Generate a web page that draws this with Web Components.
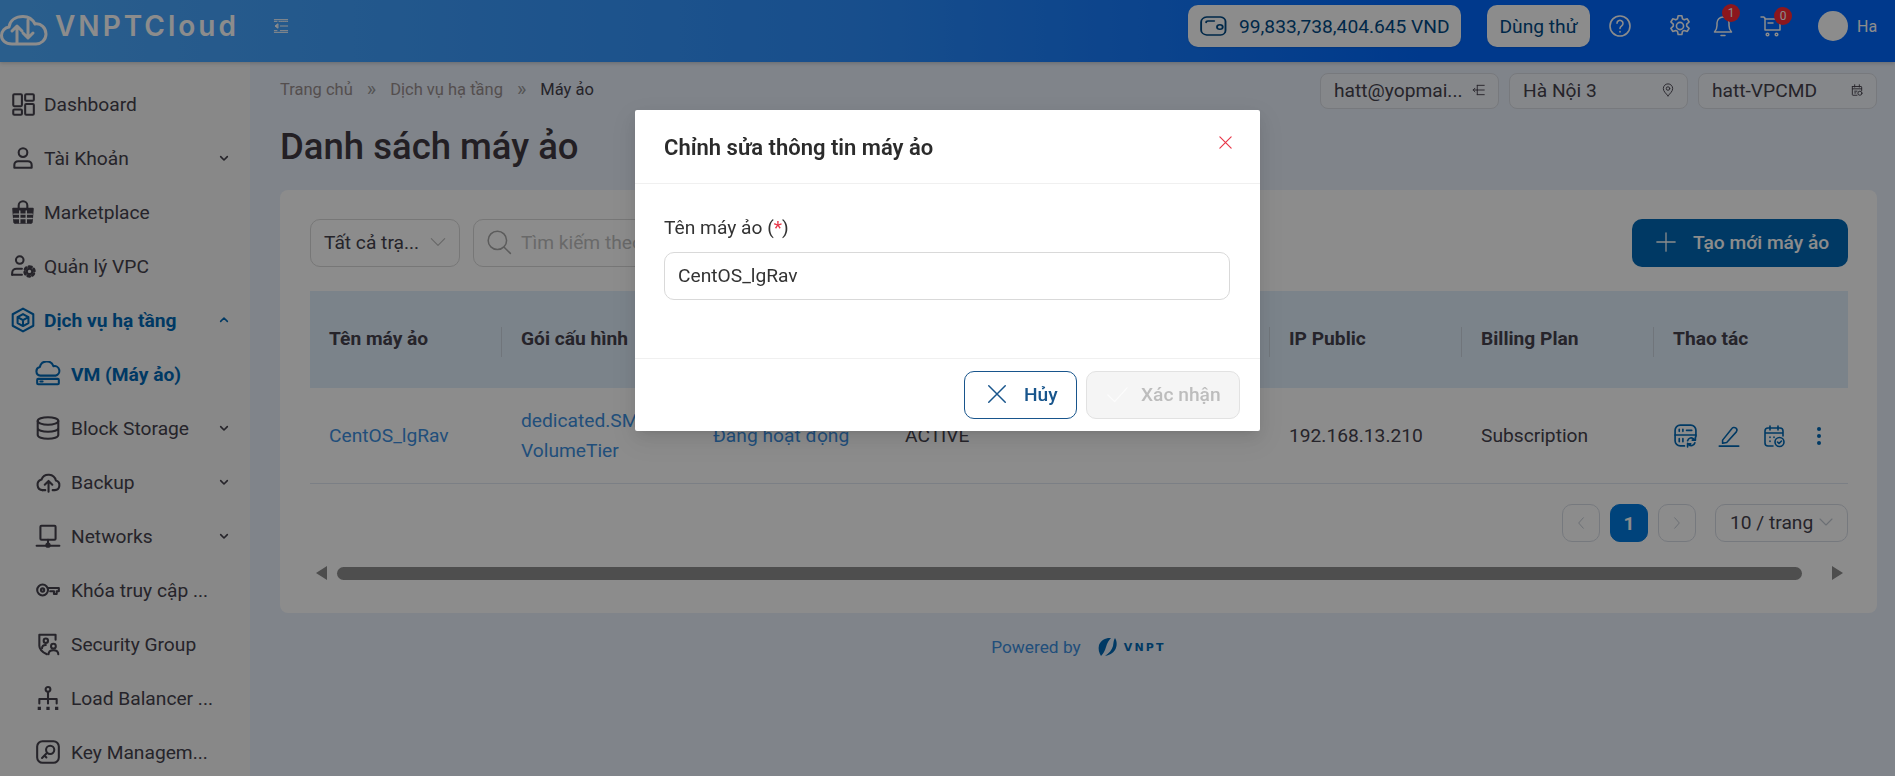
<!DOCTYPE html>
<html lang="vi">
<head>
<meta charset="utf-8">
<title>Danh sách máy ảo</title>
<style>
    html, body { margin: 0; height: 100%; overflow: hidden; }
    body { font-family: Roboto, "Noto Sans", sans-serif; color: #45424d; background: #e9f0fb; }
</style>
</head>
<body>
<app-shell>
    <app-header slot="header"></app-header>
    <side-nav slot="nav"></side-nav>
    <vm-page></vm-page>
</app-shell>
<edit-modal title="Chỉnh sửa thông tin máy ảo" label="Tên máy ảo" value="CentOS_lgRav"></edit-modal>

<script>
// all icons in one place, 24x24 box unless a viewBox is given
const ICONS = {
    dashboard: '<rect x="3" y="3" width="8" height="11" rx="1"/><rect x="14" y="3" width="8" height="6" rx="1"/><rect x="3" y="17" width="8" height="5" rx="1"/><rect x="14" y="12" width="8" height="10" rx="1"/>',
    user: '<circle cx="12" cy="7" r="4"/><path d="M4 21v-2.500c0-2 1.500-3.500 3.500-3.500h9c2 0 3.500 1.500 3.500 3.500V21z"/>',
    market: '<path d="M8 9V6a4 4 0 0 1 8 0v3"/><path fill="currentColor" d="M3 9h18l-1 12.500a1 1 0 0 1-1 .5H5a1 1 0 0 1-1-.5z"/><path stroke="#f7f7f7" stroke-width="1.300" d="M3.500 14h17M3.500 18h17M9 11v11M15 11v11"/>',
    vpc: '<circle cx="9" cy="6.500" r="3.500"/><path d="M2 20v-1.500c0-2.500 2-4 4-4h5"/><path d="M2 20h9"/><circle cx="18" cy="17" r="2.500"/><path stroke-width="2.500" stroke-dasharray="2 2.500" d="M18 12.500a4.500 4.500 0 1 1 0 9a4.500 4.500 0 1 1 0-9z"/>',
    infra: '<path d="M12 1.500l9.500 5.200v10.600L12 22.500l-9.500-5.200V6.700z"/><path d="M12 6.500l5 2.800v5.500l-5 2.800-5-2.800V9.300zM7 9.300l5 2.800 5-2.800M12 12.100v5.500"/>',
    vm: '<path d="M5 13.500a4 4 0 0 1-.5-7.900A6.500 6.500 0 0 1 17 4.800a4.400 4.400 0 0 1 2 8.700z"/><rect x="2" y="16.500" width="20" height="5" rx="1"/><path d="M5 19h2"/>',
    storage: '<ellipse cx="12" cy="5.500" rx="9.500" ry="3.500"/><path d="M2.500 5.500v13c0 2 4.300 3.500 9.500 3.500s9.500-1.500 9.500-3.500v-13M2.500 12c0 2 4.300 3.500 9.500 3.500s9.500-1.500 9.500-3.500"/>',
    backup: '<path d="M7 19.500a5 5 0 0 1-1-9.800 7 7 0 0 1 13.300 1 4.500 4.500 0 0 1-1 8.800h-2"/><path d="M7 19.500h2.500"/><path d="M12.500 21v-9M9 14.500l3.500-3.500 3.500 3.500"/>',
    network: '<rect x="5" y="2.500" width="14" height="13" rx="1"/><path d="M12 15.500V20M1.500 21h21"/><circle cx="12" cy="20.500" r="1.500" fill="currentColor"/>',
    key: '<circle cx="7" cy="12" r="5"/><circle cx="7" cy="12" r="1.500"/><path d="M12 10.200h10v3h-2v2.500h-2.500v-2.500H14"/>',
    security: '<path d="M19 8V3.500H4v10c0 3.500 3 6 7 8"/><circle cx="10" cy="9" r="2"/><path d="M6.500 16c0-2 1.500-3 3.500-3"/><circle cx="17" cy="14" r="2.200"/><path d="M12.500 21.500c0-2.500 2-3.800 4.500-3.800s4.500 1.300 4.500 3.800"/>',
    balancer: '<circle cx="12" cy="4" r="2.200"/><path d="M12 6.500V13M4 17v-4h16v4M12 13v4"/><path stroke-width="3" stroke-linecap="butt" d="M2.500 21.500h3M10.500 21.500h3M18.500 21.500h3"/>',
    keymgmt: '<rect x="2" y="2" width="20" height="20" rx="5"/><circle cx="14" cy="10" r="3.800"/><path d="M11 13l-4.500 4.500M9 15.500l1.500 1.500"/>',
    chevron: '<path d="M7 10l5 5 5-5"/>',
    chevronup: '<path d="M7 14l5-5 5 5"/>',
    down: '<path d="M4 8l8 8 8-8"/>',
    prev: '<path d="M16 3l-8 9 8 9"/>',
    next: '<path d="M8 3l8 9-8 9"/>',
    menu: '<path stroke-dasharray="2 1" d="M9 5h13M2 5h4M11 12h11M11 19h11M2 19h4"/><path d="M7 9l-4 3 4 3z" fill="currentColor"/><path stroke-dasharray="2 1" d="M2 2.500h20M2 21.500h20"/>',
    wallet: '<path d="M7 3h11a4.500 4.500 0 0 1 4 4.500v9a4.500 4.500 0 0 1-4 4.500H7a5 5 0 0 1-4.500-5V8A5 5 0 0 1 7 3z"/><path d="M6.500 8.500c0-1 .5-1.500 1.500-1.500h5"/><circle cx="17.500" cy="13" r="2.300"/>',
    help: '<circle cx="12" cy="12" r="10"/><path d="M9 9.300a3 3 0 1 1 4.700 2.500c-1 .7-1.700 1.300-1.700 2.700"/><path d="M12 17.500v.5"/>',
    gear: '<circle cx="12" cy="12" r="3.300"/><path d="M10.300 2.500h3.400l.6 2.900 1.600.9 2.800-.9 1.700 2.900-2.200 2v1.800l2.200 2-1.700 2.900-2.800-.9-1.600.9-.6 2.900h-3.400l-.6-2.900-1.600-.9-2.800.9-1.700-2.900 2.200-2v-1.800l-2.200-2 1.700-2.900 2.800.9 1.600-.9z"/>',
    bell: '<path d="M3.500 18c1.500-1.500 2.500-3 2.500-6.500V9a6 6 0 0 1 12 0v2.500c0 3.500 1 5 2.500 6.500z"/><path d="M10 21.500h4"/>',
    cart: '<path d="M2 3h3l1 2h15v11H6V4"/><path d="M9 9h5"/><circle cx="8.500" cy="20.500" r="1.300"/><circle cx="17.500" cy="20.500" r="1.300"/>',
    tree: '<path d="M9 12H2M9 4h12M9 12h12M9 20h12M9 4v16"/><path d="M5 9l-3 3 3 3"/>',
    pin: '<path d="M12 22c-4-4.500-8-8-8-12.500a8 8 0 0 1 16 0C20 14 16 17.500 12 22z"/><circle cx="12" cy="9.500" r="3"/>',
    vpcbox: '<path d="M4 6h15a1 1 0 0 1 1 1v6M4 6v14a1 1 0 0 0 1 1h7M4 10h16M8 3v4M16 3v4"/><circle cx="17" cy="17.500" r="3.500"/><path d="M8 14h4M8 17h2"/>',
    search: '<circle cx="10.500" cy="10.500" r="8.500"/><path d="M17 17l5.500 5.500"/>',
    plus: '<path d="M12 2v20M2 12h20"/>',
    close: '<path d="M3 3l18 18M21 3L3 21"/>',
    check: '<path d="M2 12.500l7 7L22 5"/>',
    serverSync: '<path d="M11 22H7a5 5 0 0 1-5-5V7a5 5 0 0 1 5-5h10a5 5 0 0 1 5 5v6"/><path d="M2 11.500h20M6 6v2M9.500 6v2M13 7h5M6 15v3M9.500 15v3"/><path d="M14 17a3.500 3.500 0 0 1 6-1.500l1.500 1M21.500 13.500v3h-3M21 19a3.500 3.500 0 0 1-6 1.500l-1-1M14 23v-3h3"/>',
    pencil: '<path d="M5 16.500L15 4a3 3 0 0 1 5 3.500L9.500 19l-4.500 1z"/><path d="M1.500 23h21" stroke-width="2"/>',
    calCheck: '<path d="M11 22H6a3 3 0 0 1-3-3V7a3 3 0 0 1 3-3h12a3 3 0 0 1 3 3v5M3 9h18M8 2v4M16 2v4M8 13v.5M12 13v.5M8 17v.5"/><circle cx="17.500" cy="18" r="4.500"/><path d="M15.500 18l1.500 1.500 2.500-2.500"/>',
    cloudLogo: '<path d="M12 39C5 39 1.500 35 1.500 30.500 1.500 26 5 22.500 9 22c1-7 7-10.500 14-10.500 6 0 10 3.500 12 7.500 6-1 11 4 11 10s-5 10-10 10z"/><path d="M17 38V21M12 26l5-5 5 5"/><path d="M28 15v18M23 28l5 5 5-5"/>'
};

class UiIcon extends HTMLElement {
    connectedCallback() {
        const name = this.getAttribute('name');
        const size = this.getAttribute('size') || 22;
        const w = this.getAttribute('w') || 1.8;
        const box = this.getAttribute('box') || '0 0 24 24';
        this.attachShadow({ mode: 'open' }).innerHTML = `
            <style>
                :host { display: inline-flex; flex: none; line-height: 0; }
                svg { fill: none; stroke: currentColor; stroke-linecap: round; stroke-linejoin: round; }
            </style>
            <svg width="${size}" height="${this.getAttribute('h') || size}" viewBox="${box}" stroke-width="${w}" preserveAspectRatio="none">${ICONS[name] || ''}</svg>
        `;
    }
}
customElements.define('ui-icon', UiIcon);

class AppShell extends HTMLElement {
    constructor() {
        super();
        this.attachShadow({ mode: 'open' }).innerHTML = `
            <style>
                :host { display: grid; grid-template-columns: 250px 1fr; grid-template-rows: 62px 1fr; height: 776px; overflow: hidden; }
                .top { grid-column: 1 / 3; position: relative; z-index: 1; box-shadow: 0 1px 4px rgba(0,0,0,.2); }
                .nav { overflow: hidden; }
                .main { overflow: hidden; min-width: 0; }
            </style>
            <div class="top"><slot name="header"></slot></div>
            <div class="nav"><slot name="nav"></slot></div>
            <div class="main"><slot></slot></div>
        `;
    }
}
customElements.define('app-shell', AppShell);

class AppHeader extends HTMLElement {
    constructor() {
        super();
        this.attachShadow({ mode: 'open' }).innerHTML = `
            <style>
                :host { display: flex; align-items: center; height: 62px; box-sizing: border-box; padding-bottom: 10px; color: #fff; background: linear-gradient(90deg, #4eacff 0%, #2c8fff 45%, #0069ff 75%, #0069ff 100%); }
                .logo { display: flex; align-items: center; width: 273px; flex: none; color: #fff; }
                .logo b { font: 600 28px/1 Inter, Roboto, sans-serif; letter-spacing: 3px; margin-left: 7px; white-space: nowrap; }
                .spacer { flex: 1; }
                .pill { display: flex; align-items: center; height: 42px; box-sizing: border-box; background: #fff; border-radius: 10px; color: #004a85; font-size: 19.2px; box-shadow: 0 1px 2px rgba(0,0,0,.1); white-space: nowrap; }
                .wallet { width: 273px; padding-left: 10px; gap: 11px; }
                .try { width: 103px; justify-content: center; margin-left: 26px; }
                .tool { position: relative; display: flex; }
                .count { position: absolute; width: 18px; height: 18px; border-radius: 50%; background: #ff2a35; color: #fff; font-size: 12px; line-height: 18px; text-align: center; }
                .avatar { width: 30px; height: 30px; border-radius: 50%; background: #fff; margin-left: 35px; flex: none; }
                .name { width: 20px; margin: 0 18px 0 9px; font-size: 16px; flex: none; }
            </style>
            <div class="logo">
                <ui-icon name="cloudLogo" box="0 0 48 42" size="48" h="42" w="3"></ui-icon>
                <b>VNPTCloud</b>
            </div>
            <ui-icon name="menu" size="16" w="1.500"></ui-icon>
            <div class="spacer"></div>
            <div class="pill wallet"><ui-icon name="wallet" size="30" h="24" w="1.500"></ui-icon>99,833,738,404.645 VND</div>
            <div class="pill try">Dùng thử</div>
            <div class="tool" style="margin-left:18px"><ui-icon name="help" size="24" w="1.600"></ui-icon></div>
            <div class="tool" style="margin-left:35px"><ui-icon name="gear" size="26" w="1.500"></ui-icon></div>
            <div class="tool" style="margin-left:18px"><ui-icon name="bell" size="24" w="1.500"></ui-icon><span class="count" style="left:11px;top:-10px">1</span></div>
            <div class="tool" style="margin-left:24px"><ui-icon name="cart" size="24" w="1.500"></ui-icon><span class="count" style="left:15px;top:-7px">0</span></div>
            <div class="avatar"></div>
            <span class="name">Ha</span>
        `;
    }
}
customElements.define('app-header', AppHeader);

class NavItem extends HTMLElement {
    constructor() {
        super();
        this.attachShadow({ mode: 'open' }).innerHTML = `
            <style>
                :host { display: flex; align-items: center; height: 54px; padding-left: 12px; color: #45424d; font-size: 19.2px; white-space: nowrap; }
                :host([sub]) { padding-left: 37px; }
                :host([active]) { color: #0069b6; font-weight: 700; }
                .ic { width: 32px; flex: none; display: flex; }
                .ic ui-icon { margin-left: -2px; }
                :host([sub]) .ic { width: 34px; }
                .txt { flex: 1; }
                .arrow { margin-right: 18px; }
            </style>
            <span class="ic"></span>
            <span class="txt"><slot></slot></span>
        `;
    }

    connectedCallback() {
        const ic = document.createElement('ui-icon');
        ic.setAttribute('name', this.getAttribute('icon'));
        ic.setAttribute('size', 26);
        ic.setAttribute('w', 1.9);
        this.shadowRoot.querySelector('.ic').append(ic);
        if (this.hasAttribute('arrow')) {
            const arrow = document.createElement('ui-icon');
            arrow.className = 'arrow';
            arrow.setAttribute('name', this.getAttribute('arrow'));
            arrow.setAttribute('size', 16);
            arrow.setAttribute('w', 2.4);
            this.shadowRoot.append(arrow);
        }
    }
}
customElements.define('nav-item', NavItem);

class SideNav extends HTMLElement {
    constructor() {
        super();
        this.attachShadow({ mode: 'open' }).innerHTML = `
            <style>
                :host { display: block; height: 714px; box-sizing: border-box; padding-top: 15px; background: #f7f7f7; overflow: hidden; }
            </style>
            <nav-item icon="dashboard">Dashboard</nav-item>
            <nav-item icon="user" arrow="chevron">Tài Khoản</nav-item>
            <nav-item icon="market">Marketplace</nav-item>
            <nav-item icon="vpc">Quản lý VPC</nav-item>
            <nav-item icon="infra" arrow="chevronup" active>Dịch vụ hạ tầng</nav-item>
            <nav-item icon="vm" sub active>VM (Máy ảo)</nav-item>
            <nav-item icon="storage" sub arrow="chevron">Block Storage</nav-item>
            <nav-item icon="backup" sub arrow="chevron">Backup</nav-item>
            <nav-item icon="network" sub arrow="chevron">Networks</nav-item>
            <nav-item icon="key" sub>Khóa truy cập ...</nav-item>
            <nav-item icon="security" sub>Security Group</nav-item>
            <nav-item icon="balancer" sub>Load Balancer ...</nav-item>
            <nav-item icon="keymgmt" sub>Key Managem...</nav-item>
        `;
    }
}
customElements.define('side-nav', SideNav);

class ScopeSelect extends HTMLElement {
    constructor() {
        super();
        this.attachShadow({ mode: 'open' }).innerHTML = `
            <style>
                :host { display: flex; align-items: center; justify-content: space-between; width: 179px; height: 36px; box-sizing: border-box; padding: 0 12px 2px 13px; border: 1px solid #d9dde3; border-radius: 8px; background: #f3f6fb; font-size: 19.2px; color: #45424d; white-space: nowrap; }
            </style>
            <slot></slot>
        `;
    }

    connectedCallback() {
        const ic = document.createElement('ui-icon');
        ic.setAttribute('name', this.getAttribute('icon'));
        ic.setAttribute('size', 14);
        ic.setAttribute('w', 1.6);
        this.shadowRoot.append(ic);
    }
}
customElements.define('scope-select', ScopeSelect);

class VmPage extends HTMLElement {
    constructor() {
        super();
        this.attachShadow({ mode: 'open' }).innerHTML = `
            <style>
                :host { display: block; padding: 0 18px 0 30px; }
                .crumbs-row { display: flex; align-items: center; justify-content: space-between; height: 36px; margin-top: 11px; }
                .crumbs { display: flex; align-items: center; font-size: 16.5px; color: #9a8f8f; margin-top: -4px; }
                .crumbs i { font-style: normal; margin: 0 14px; font-size: 20px; line-height: 1; color: #9a9a9a; }
                .crumbs b { font-weight: 400; color: #45424d; }
                .scopes { display: flex; gap: 10px; }
                h1 { margin: 0; font: 500 36.5px/50px Roboto, sans-serif; color: #403a42; height: 81px; padding-top: 13px; box-sizing: border-box; }
                .powered { display: flex; align-items: center; justify-content: center; height: 68px; color: #3c8fe0; font-size: 17.3px; }
                .powered svg { margin: 0 6px 0 17px; }
                .powered b { font: 700 11px/1 "DejaVu Sans", sans-serif; letter-spacing: 2.2px; color: #0069b6; }
            </style>
            <div class="crumbs-row">
                <div class="crumbs">Trang chủ<i>»</i>Dịch vụ hạ tầng<i>»</i><b>Máy ảo</b></div>
                <div class="scopes">
                    <scope-select icon="tree">hatt@yopmai...</scope-select>
                    <scope-select icon="pin">Hà Nội 3</scope-select>
                    <scope-select icon="vpcbox">hatt-VPCMD</scope-select>
                </div>
            </div>
            <h1>Danh sách máy ảo</h1>
            <vm-card></vm-card>
            <div class="powered">Powered by
                <svg width="20" height="20" viewBox="0 0 20 20"><path fill="#0069b6" d="M1 8C3 3 8 .5 13 1c-2 2-4 5-5 9-1 4-3 7-5 9-2-3-3-7-2-11z"/><path fill="#0069b6" d="M17 1c2 3 2.500 8 0 12-2 3-6 5.500-10 6 4-3 7-6 8-10 .5-3 .5-6 2-8z"/></svg>
                <b>VNPT</b>
            </div>
        `;
    }
}
customElements.define('vm-page', VmPage);

class VmCard extends HTMLElement {
    constructor() {
        super();
        this.attachShadow({ mode: 'open' }).innerHTML = `
            <style>
                :host { display: block; height: 423px; box-sizing: border-box; padding: 29px 29px 0 30px; background: #fff; border-radius: 8px; font-size: 19.2px; color: #45424d; }
                .tools { display: flex; align-items: center; gap: 13px; height: 48px; }
                .field { display: flex; align-items: center; height: 48px; box-sizing: border-box; border: 1px solid #d9d9d9; border-radius: 10px; padding: 0 13px 2px; }
                .status { width: 150px; justify-content: space-between; white-space: nowrap; padding-right: 11px; }
                .status ui-icon { color: #bdbdbd; }
                .search { width: 500px; gap: 9px; color: #bfbfbf; white-space: nowrap; overflow: hidden; padding-left: 12px; }
                .search ui-icon { color: #a8a8a8; }
                .create { margin-left: auto; display: flex; align-items: center; gap: 16px; width: 216px; height: 48px; box-sizing: border-box; padding: 0 0 2px 23px; background: #0069b6; color: #fff; border-radius: 10px; font-weight: 500; white-space: nowrap; }
                .table { display: grid; grid-template-columns: repeat(7, 192px) 1fr; margin-top: 24px; }
                .th { height: 97px; background: #e0eefc; display: flex; align-items: center; padding: 0 0 2px 19px; font-weight: 700; position: relative; box-sizing: border-box; }
                .th + .th::before { content: ""; position: absolute; left: -1px; top: 36px; height: 30px; width: 1px; background: #cdd6e0; }
                .td { height: 96px; border-bottom: 1px solid #e1e8f2; display: flex; align-items: center; padding-left: 19px; box-sizing: border-box; line-height: 30px; }
                .link { color: #3c8fe0; }
                .actions { color: #0069b6; }
                .pager { display: flex; justify-content: flex-end; align-items: center; gap: 10px; height: 38px; margin-top: 20px; }
                .page { width: 38px; height: 38px; box-sizing: border-box; border: 1px solid #d8dde6; border-radius: 10px; display: flex; align-items: center; justify-content: center; color: #c3cad4; }
                .page.on { background: #007ae0; border-color: #007ae0; color: #fff; font-weight: 700; }
                .size { width: 133px; height: 38px; box-sizing: border-box; margin-left: 9px; border: 1px solid #d8dde6; border-radius: 10px; display: flex; align-items: center; justify-content: space-between; padding: 0 12px 2px 14px; white-space: nowrap; }
                .size ui-icon { color: #c3cad4; }
                .scroll { display: flex; align-items: center; height: 24px; margin-top: 19px; padding: 0 5px 0 6px; background: #fff; }
                .scroll .left, .scroll .right { width: 0; height: 0; border: 7px solid transparent; }
                .scroll .left { border-left: 0; border-right: 11px solid #8c8c8c; }
                .scroll .right { border-right: 0; border-left: 11px solid #8c8c8c; }
                .thumb { flex: 1; height: 13px; border-radius: 7px; background: #8e8e8e; margin: 0 30px 0 10px; }
            </style>
            <div class="tools">
                <div class="field status">Tất cả trạ...<ui-icon name="down" size="20" w="1.400"></ui-icon></div>
                <div class="field search"><ui-icon name="search" size="26" w="1.400"></ui-icon>Tìm kiếm theo</div>
                <div class="create"><ui-icon name="plus" size="22" w="1.400"></ui-icon>Tạo mới máy ảo</div>
            </div>
            <div class="table">
                <div class="th">Tên máy ảo</div>
                <div class="th">Gói cấu hình</div>
                <div class="th"></div>
                <div class="th"></div>
                <div class="th"></div>
                <div class="th">IP Public</div>
                <div class="th">Billing Plan</div>
                <div class="th">Thao tác</div>
                <div class="td link">CentOS_lgRav</div>
                <div class="td link">dedicated.SMALL<br>VolumeTier</div>
                <div class="td link">Đang hoạt động</div>
                <div class="td">ACTIVE</div>
                <div class="td"></div>
                <div class="td">192.168.13.210</div>
                <div class="td">Subscription</div>
                <div class="td actions">
                    <ui-icon name="serverSync" size="25" w="1.600"></ui-icon>
                    <ui-icon name="pencil" size="22" w="1.700" style="margin-left:20px"></ui-icon>
                    <ui-icon name="calCheck" size="24" w="1.600" style="margin-left:22px"></ui-icon>
                    <svg style="margin-left:30px" width="6" height="20" viewBox="0 0 6 20" fill="currentColor"><circle cx="3" cy="3" r="2"/><circle cx="3" cy="10" r="2"/><circle cx="3" cy="17" r="2"/></svg>
                </div>
            </div>
            <div class="pager">
                <div class="page"><ui-icon name="prev" size="14" w="1.700"></ui-icon></div>
                <div class="page on">1</div>
                <div class="page"><ui-icon name="next" size="14" w="1.700"></ui-icon></div>
                <div class="size">10 / trang<ui-icon name="down" size="18" w="1.500"></ui-icon></div>
            </div>
            <div class="scroll"><span class="left"></span><span class="thumb"></span><span class="right"></span></div>
        `;
    }
}
customElements.define('vm-card', VmCard);

class EditModal extends HTMLElement {
    constructor() {
        super();
        this.attachShadow({ mode: 'open' }).innerHTML = `
            <style>
                :host { position: fixed; inset: 0; z-index: 10; display: flex; justify-content: center; align-items: flex-start; background: rgba(0,0,0,.45); color: #333; }
                .dialog { width: 625px; height: 321px; margin-top: 110px; background: #fff; border-radius: 2px; display: flex; flex-direction: column; position: relative; box-shadow: 0 6px 16px rgba(0,0,0,.08), 0 3px 6px -4px rgba(0,0,0,.12), 0 9px 28px 8px rgba(0,0,0,.05); }
                header { height: 74px; flex: none; box-sizing: border-box; border-bottom: 1px solid #f0f0f0; display: flex; align-items: center; padding: 2px 30px 0 29px; font: 600 22px/1 Roboto, sans-serif; color: #2b2b2b; }
                .x { position: absolute; right: 27px; top: 25px; color: #e8374a; }
                .body { flex: 1; padding: 32px 30px 0 29px; font-size: 19.2px; }
                .star { color: #e8374a; }
                .input { margin-top: 13px; height: 48px; box-sizing: border-box; border: 1px solid #d9d9d9; border-radius: 10px; display: flex; align-items: center; padding: 0 13px 2px; }
                footer { height: 73px; flex: none; box-sizing: border-box; border-top: 1px solid #f0f0f0; display: flex; justify-content: flex-end; align-items: flex-start; gap: 9px; padding: 12px 20px 0 0; }
                .btn { height: 48px; box-sizing: border-box; border-radius: 10px; display: flex; align-items: center; font-size: 19.2px; font-weight: 500; white-space: nowrap; padding-bottom: 2px; }
                .cancel { width: 113px; border: 1px solid #18558c; color: #18558c; padding-left: 21px; gap: 16px; }
                .ok { width: 154px; border: 1px solid #e2e2e2; background: #f5f5f5; color: #bdbdbd; padding-left: 19px; gap: 12px; }
                .ok ui-icon { color: #fcfcfc; }
            </style>
            <div class="dialog" role="dialog">
                <header></header>
                <ui-icon class="x" name="close" size="15" w="1.900"></ui-icon>
                <div class="body">
                    <div><span class="lbl"></span> (<span class="star">*</span>)</div>
                    <div class="input"></div>
                </div>
                <footer>
                    <div class="btn cancel"><ui-icon name="close" size="22" w="1.600"></ui-icon>Hủy</div>
                    <div class="btn ok"><ui-icon name="check" size="23" w="1.200"></ui-icon>Xác nhận</div>
                </footer>
            </div>
        `;
    }

    connectedCallback() {
        this.shadowRoot.querySelector('header').textContent = this.getAttribute('title');
        this.shadowRoot.querySelector('.lbl').textContent = this.getAttribute('label');
        this.shadowRoot.querySelector('.input').textContent = this.getAttribute('value');
    }
}
customElements.define('edit-modal', EditModal);
</script>
</body>
</html>
